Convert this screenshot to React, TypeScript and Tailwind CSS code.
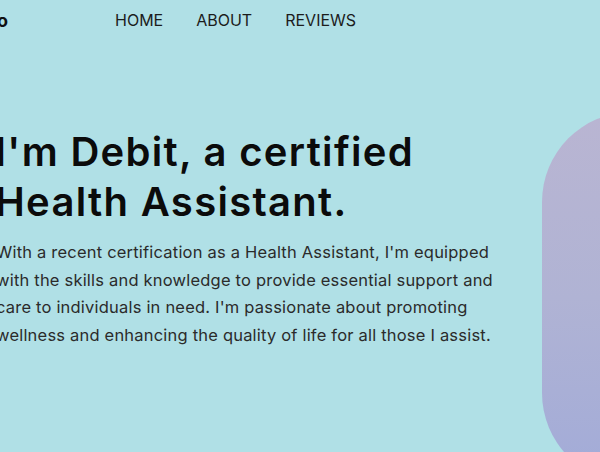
const links = ["HOME", "ABOUT", "REVIEWS"];

export default function App() {
  return (
    <div className="min-h-screen h-[452px] overflow-hidden bg-[#b0e0e6] font-['Inter',sans-serif]">
      {/* Navbar */}
      <nav className="flex h-10 items-center">
        <span className="ml-[-3px] w-[118px] text-[18px] font-bold text-[#111]">o</span>
        <ul className="flex gap-[33px] text-[16px] text-[#1c1c1c]">
          {links.map((l) => (
            <li key={l}>{l}</li>
          ))}
        </ul>
      </nav>

      {/* Hero */}
      <section className="flex items-start gap-[31px] ml-[-5px]">
        <div className="w-[516px] shrink-0 pt-[87px]">
          <h1 className="text-[40px] leading-[50px] font-semibold tracking-[1.3px] text-[#0b0b0b]">
            I'm Debit, a certified Health Assistant.
          </h1>
          <p className="mt-[12px] ml-[1px] text-[16.5px] leading-[27.7px] tracking-[0.2px] text-[#2b2b2b]">
            With a recent certification as a Health Assistant, I'm equipped with the skills and
            knowledge to provide essential support and care to individuals in need. I'm passionate
            about promoting wellness and enhancing the quality of life for all those I assist.
          </p>
        </div>
        <div className="mt-[72px] h-[371px] w-[320px] shrink-0 rounded-[90px] bg-gradient-to-b from-[#b9b5d2] via-[#b0b3d4] to-[#a2abd8]" />
      </section>
    </div>
  );
}
